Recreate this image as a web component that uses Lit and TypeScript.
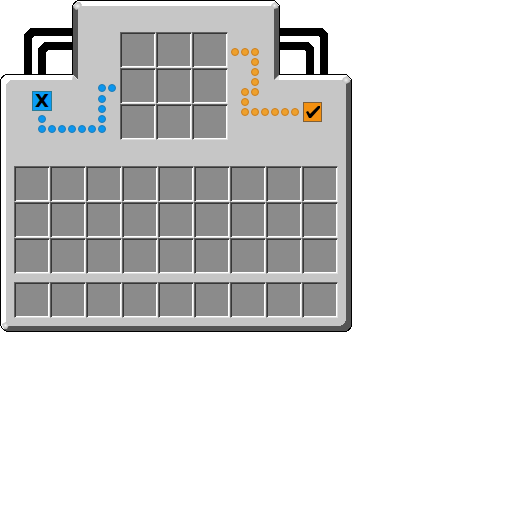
import { LitElement, html, css, svg } from "lit";
import { customElement, property } from "lit/decorators.js";

type Point = [number, number];

const BLUE_TRAIL: Point[] = [
  [112, 88], [102, 88], [102, 99], [102, 109], [102, 119], [102, 129],
  [92, 129], [82, 129], [72, 129], [62, 129], [52, 129], [42, 129], [42, 119],
];

const ORANGE_TRAIL: Point[] = [
  [235, 52], [245, 52], [255, 52], [255, 62], [255, 72], [255, 82], [255, 92],
  [245, 92], [245, 102], [245, 112], [255, 112], [265, 112], [275, 112],
  [285, 112], [295, 112],
];

@customElement("slot-grid")
export class SlotGrid extends LitElement {
  @property({ type: Number }) columns = 9;
  @property({ type: Number }) rows = 1;
  @property() label = "";

  static styles = css`
    :host {
      display: block;
    }
    .grid {
      display: grid;
      width: max-content;
    }
    .three {
      grid-template-columns: repeat(3, 36px);
    }
    .nine {
      grid-template-columns: repeat(9, 36px);
    }
    .cell {
      box-sizing: border-box;
      height: 36px;
      margin: 0;
      padding: 0;
      border: 1px solid;
      border-color: #636363 #dedede #dedede #636363;
      border-radius: 0;
      background: #8b8b8b;
      box-shadow: inset 1px 1px #373737, inset -1px -1px #ffffff;
    }
  `;

  render() {
    const cells = Array.from({ length: this.columns * this.rows }, (_, i) => i + 1);
    return html`
      <div class="grid ${this.columns === 3 ? "three" : "nine"}" role="group" aria-label=${this.label}>
        ${cells.map((n) => html`<button class="cell" type="button" aria-label="Slot ${n}"></button>`)}
      </div>
    `;
  }
}

@customElement("app-root")
export class AppRoot extends LitElement {
  static styles = css`
    :host {
      display: block;
      min-height: 100vh;
      background: #ffffff;
      font-family: "DejaVu Sans", sans-serif;
    }
    .window {
      position: relative;
      box-sizing: border-box;
      width: 100%;
      max-width: 352px;
      padding: 32px 14px 14px;
    }
    .backdrop {
      position: absolute;
      top: 0;
      left: 0;
      width: 352px;
      height: 332px;
    }
    .bench {
      position: relative;
      display: grid;
      grid-template-columns: 106px 108px 1fr;
      margin-bottom: 26px;
    }
    .cancel-side {
      padding: 59px 0 0 18px;
    }
    .confirm-side {
      padding: 70px 0 0 75px;
    }
    .action {
      box-sizing: border-box;
      display: flex;
      align-items: center;
      justify-content: center;
      width: 20px;
      height: 20px;
      margin: 0;
      padding: 0;
      border: 1px solid;
      border-radius: 0;
      color: #000000;
      font: bold 18px/18px "DejaVu Sans", sans-serif;
    }
    .cancel {
      background: #0a9cf5;
      border-color: #2b7c96;
    }
    .confirm {
      width: 19px;
      background: #f39010;
      border-color: #806038;
    }
    .tick {
      display: block;
      width: 17px;
      height: 18px;
    }
    .inventory {
      position: relative;
      display: grid;
      gap: 8px;
    }
  `;

  private backdrop() {
    return html`
      <svg class="backdrop" viewBox="0 0 352 332" aria-hidden="true">
        <defs>
          <radialGradient id="bead">
            <stop offset="0" stop-color="#f4f4f4" />
            <stop offset="0.4" stop-color="#d8d8d8" />
            <stop offset="1" stop-color="#b4b4b4" />
          </radialGradient>
        </defs>

        <g fill="#000000" shape-rendering="crispEdges">
          <path d="M24 75V34L30 28H73V36H34L32 38V75Z" />
          <path d="M38 75V48L44 42H73V50H48L46 52V75Z" />
          <path d="M328 75V34L322 28H279V36H318L320 38V75Z" />
          <path d="M314 75V48L308 42H279V50H304L306 52V75Z" />
        </g>

        <g shape-rendering="crispEdges">
          <path
            fill="#000000"
            d="M78 0H274L277 2L280 6V74H346L350 77L352 80V326L350 330L346 332H7L3 330L0 325V80L2 76L6 74H72V6L74 2Z"
          />
          <path
            fill="#ffffff"
            d="M78 1H274L277 3L279 6V75H346L349 77L351 80V326L349 329L346 331H7L3 329L1 325V80L3 77L6 75H73V6L75 3Z"
          />
          <path fill="#555555" d="M73 6L78 8V80L73 75Z" />
          <path fill="#555555" d="M274 7L279 6V75L274 80Z" />
          <path fill="#555555" d="M346 82L351 80V326L349 329L346 331H7L3 329L9 326H340L346 320Z" />
          <path fill="#c6c6c6" d="M80 6H274V80H346V320L344 324L340 326H9L6 323V84L10 80H78V8Z" />
        </g>

        <path fill="url(#bead)" d="M74 5L77 2H80L82 5L79 9L76 10L73 7Z" />
        <path fill="url(#bead)" d="M272 4L275 2L278 5V8L274 9L271 6Z" />
        <path fill="url(#bead)" d="M343 78L347 76L350 79V82L346 84L342 81Z" />
        <path fill="url(#bead)" d="M2 324L6 322L9 325L7 329L4 329Z" />
        <path fill="#c6c6c6" d="M73 75L78 80H72Z" />
        <path fill="#e6e6e6" d="M274 80L279 75V80Z" />

        <g fill="#0a96f0" stroke="#217cb4">
          ${BLUE_TRAIL.map(([x, y]) => svg`<circle cx=${x} cy=${y} r="3.5" />`)}
        </g>
        <g fill="#eea02c" stroke="#cb7f20">
          ${ORANGE_TRAIL.map(([x, y]) => svg`<circle cx=${x} cy=${y} r="3.5" />`)}
        </g>
      </svg>
    `;
  }

  render() {
    return html`
      <main class="window">
        ${this.backdrop()}
        <section class="bench">
          <div class="cancel-side">
            <button class="action cancel" type="button">X</button>
          </div>
          <slot-grid columns="3" rows="3" label="Crafting"></slot-grid>
          <div class="confirm-side">
            <button class="action confirm" type="button" aria-label="Confirm">
              <svg class="tick" viewBox="0 0 17 18" aria-hidden="true">
                <path d="M2 9L4 8L6 11L14 3L16 3L16 5L7 15H5Z" fill="#000000" />
              </svg>
            </button>
          </div>
        </section>
        <section class="inventory">
          <slot-grid columns="9" rows="3" label="Inventory"></slot-grid>
          <slot-grid columns="9" rows="1" label="Hotbar"></slot-grid>
        </section>
      </main>
    `;
  }
}
